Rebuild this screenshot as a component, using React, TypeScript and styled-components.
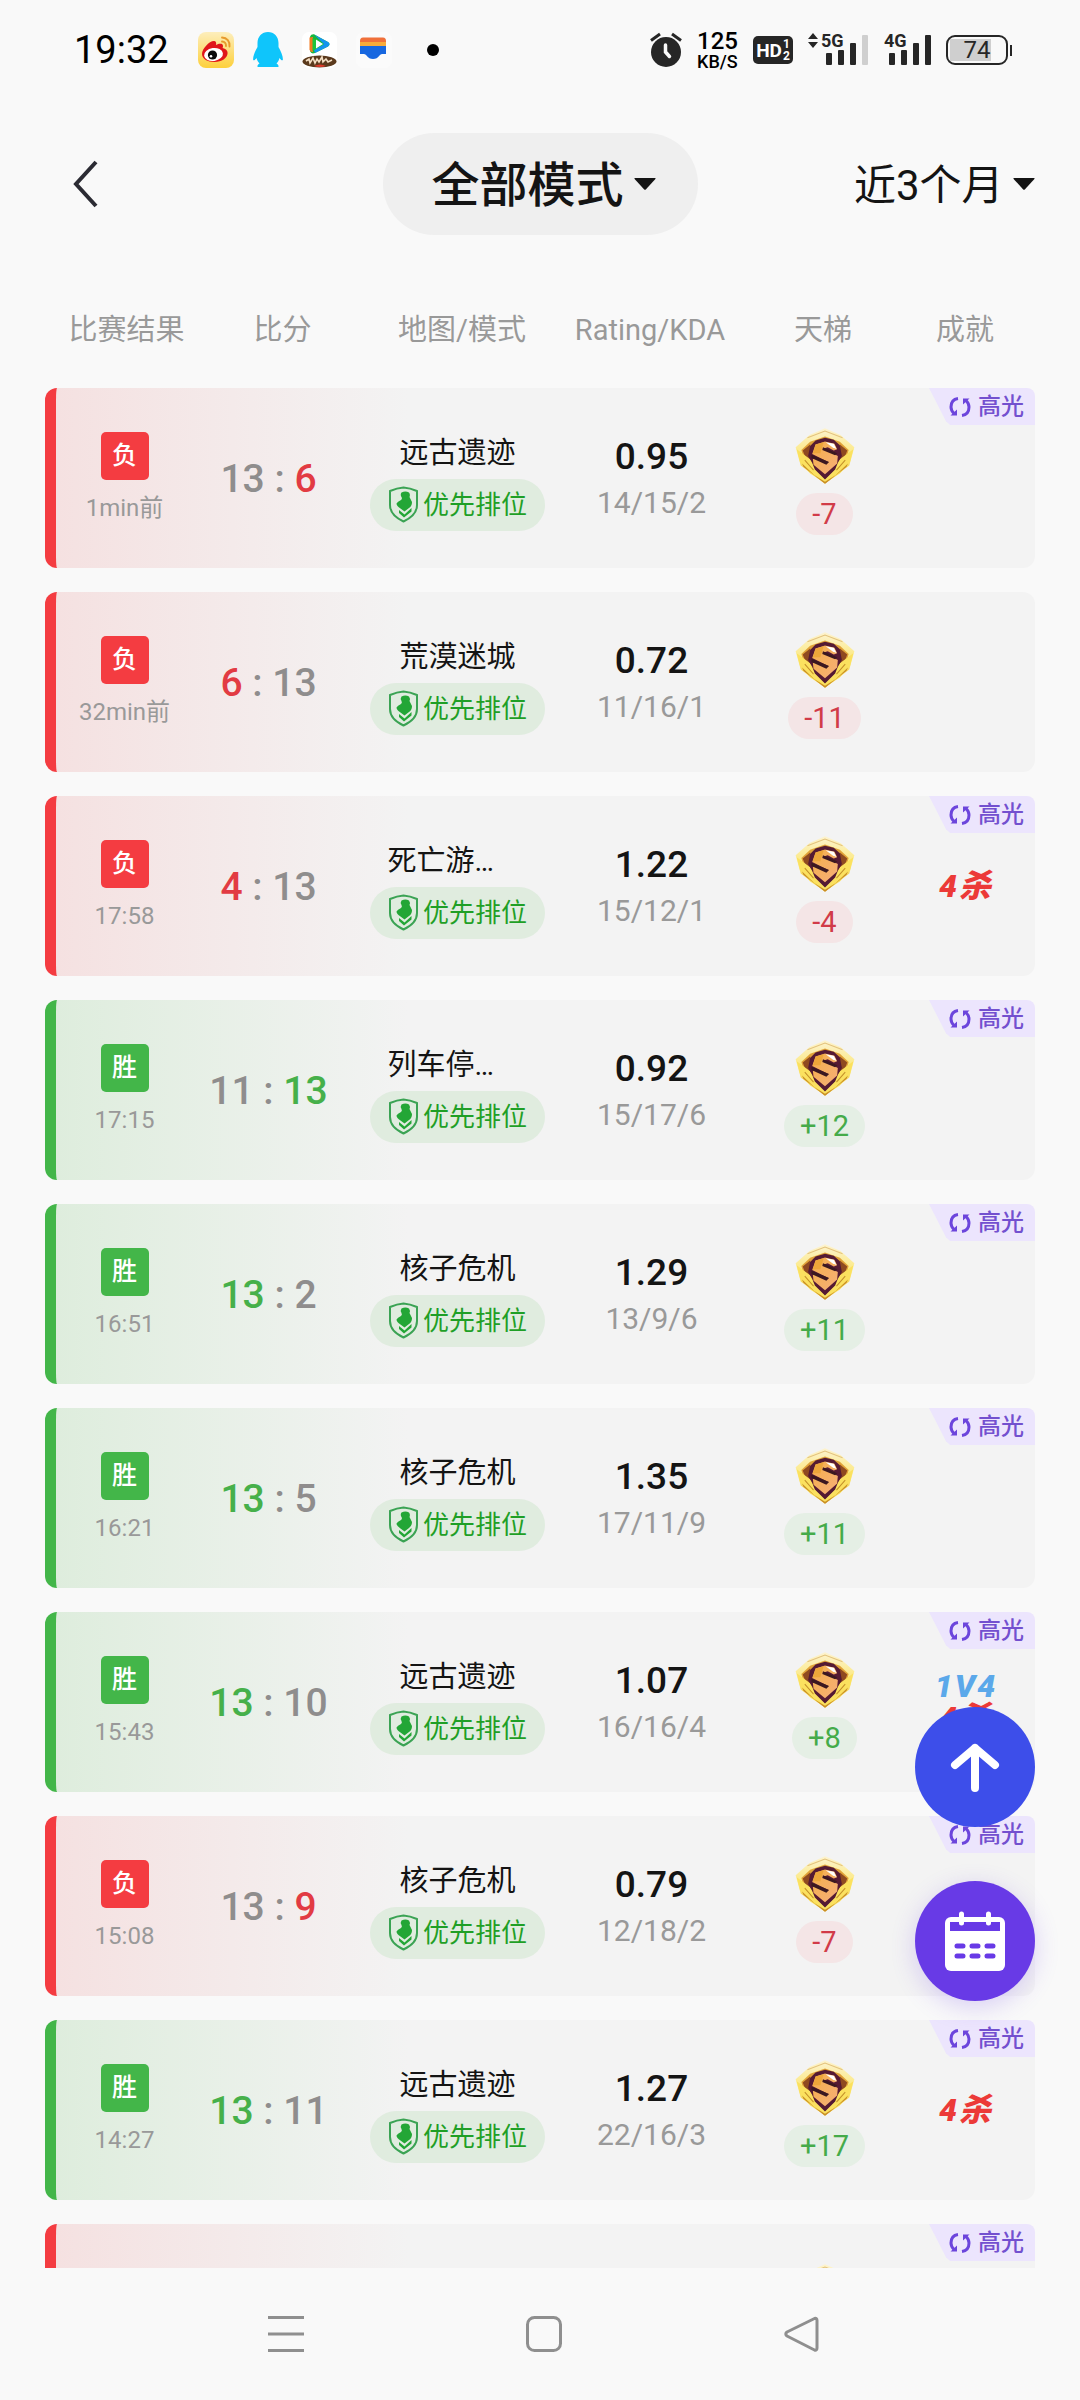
import React from "react";
import styled, { createGlobalStyle } from "styled-components";

const latinCjk = `Roboto, "Noto Sans CJK SC", "Noto Sans", sans-serif`;

type Result = "win" | "loss";

const tone = {
  win: { solid: "#43b649", score: "#46b04a", tint: "#deeddd", pill: "#e5efe5", delta: "#45ab4a", label: "胜" },
  loss: { solid: "#f43c41", score: "#e23b43", tint: "#f5e1e1", pill: "#f4e5e6", delta: "#d13b48", label: "负" },
};

const GlobalStyle = createGlobalStyle`
  *, *::before, *::after { box-sizing: border-box; }
  body { margin: 0; background: #f9f9f9; font-family: ${latinCjk}; color: #141414; }
  button, select { font: inherit; color: inherit; border: 0; background: none; padding: 0; cursor: pointer; }
  svg { display: block; flex: none; }
`;

const Shell = styled.div`
  height: 100vh;
  display: flex;
  flex-direction: column;
  background: #f9f9f9;
`;

/* ---------- status bar ---------- */

const StatusBar = styled.div`
  flex: none;
  height: 100px;
  padding: 0 68px 0 74px;
  display: flex;
  align-items: center;
  justify-content: space-between;
  color: #000;
`;

const StatusGroup = styled.div<{ $gap: number }>`
  display: flex;
  align-items: center;
  gap: ${(p) => p.$gap}px;
`;

const Clock = styled.time`
  font-size: 38px;
  line-height: 44px;
  font-weight: 400;
  margin-right: 10px;
`;

const MoreDot = styled.span`
  width: 12px;
  height: 12px;
  margin-left: 16px;
  border-radius: 50%;
  background: #000;
`;

const Speed = styled.div`
  display: flex;
  flex-direction: column;
  font-weight: 500;
`;

const SpeedValue = styled.span`
  font-size: 24px;
  line-height: 24px;
`;

const SpeedUnit = styled.span`
  font-size: 18px;
  line-height: 18px;
`;

const HdBadge = styled.div`
  width: 40px;
  height: 28px;
  border-radius: 5px;
  background: #262626;
  color: #fff;
  display: flex;
  align-items: center;
  justify-content: center;
  gap: 1px;
  font-size: 19px;
  font-weight: 700;
`;

const HdLines = styled.span`
  display: flex;
  flex-direction: column;
  font-size: 12px;
  line-height: 12px;
`;

const Battery = styled.div`
  display: flex;
  align-items: center;
  gap: 2px;

  &::after {
    content: "";
    width: 2px;
    height: 11px;
    background: #262626;
  }
`;

const BatteryBody = styled.div`
  width: 62px;
  height: 30px;
  border: 2px solid #262626;
  border-radius: 9px;
  background: linear-gradient(#cfcfcf, #cfcfcf) 2px 50% / 41px 22px no-repeat;
  color: #262626;
  font-size: 24px;
  line-height: 26px;
  text-align: center;
`;

/* ---------- top bar ---------- */

const TopBar = styled.header`
  flex: none;
  height: 168px;
  padding: 0 45px;
  display: grid;
  grid-template-columns: minmax(0, 1fr) auto minmax(0, 1fr);
  align-items: center;
`;

const BackButton = styled.button`
  justify-self: start;
  padding: 12px 28px;
`;

const Picker = styled.label<{ $filled?: boolean }>`
  justify-self: end;
  display: flex;
  align-items: center;
  gap: 9px;
  height: 102px;
  padding: ${(p) => (p.$filled ? "0 42px 0 49px" : "0")};
  border-radius: 51px;
  background: ${(p) => (p.$filled ? "#efefef" : "transparent")};
  font-size: ${(p) => (p.$filled ? 48 : 42)}px;
  font-weight: ${(p) => (p.$filled ? 500 : 400)};
`;

const PickerSelect = styled.select`
  appearance: none;
  outline: 0;
  padding-top: 4px;
  line-height: 60px;
`;

/* ---------- match table ---------- */

const Scroller = styled.main`
  flex: 1;
  min-height: 0;
  padding: 0 45px;
  overflow-y: auto;
  scrollbar-width: none;
`;

const Table = styled.table`
  display: block;
`;

const TableHead = styled.thead`
  display: block;
`;

const HeadRow = styled.tr`
  height: 120px;
  padding: 4px 7px 0 11px;
  display: grid;
  grid-template-columns: 141fr 171fr 188fr 188fr 158fr 126fr;
  align-items: center;
`;

const HeadCell = styled.th`
  padding: 0;
  font-size: 29px;
  line-height: 40px;
  font-weight: 400;
  color: #999;
  text-align: center;
  white-space: nowrap;
`;

const TableBody = styled.tbody`
  display: flex;
  flex-direction: column;
  gap: 24px;
`;

const MatchRow = styled.tr<{ $result: Result }>`
  position: relative;
  height: 180px;
  padding-right: 22px;
  display: grid;
  grid-template-columns: 137fr 151fr 227fr 161fr 185fr 96fr;
  border-left: 11px solid ${(p) => tone[p.$result].solid};
  border-radius: 12px;
  background: linear-gradient(90deg, ${(p) => tone[p.$result].tint}, #f3f3f3 36%);
`;

const Cell = styled.td<{ $gap?: number; $top?: number }>`
  padding: ${(p) => p.$top ?? 0}px 0 0;
  min-width: 0;
  display: flex;
  flex-direction: column;
  align-items: center;
  justify-content: center;
  gap: ${(p) => p.$gap ?? 0}px;
  white-space: nowrap;
`;

const ResultMark = styled.span<{ $result: Result }>`
  width: 48px;
  height: 48px;
  border-radius: 5px;
  background: ${(p) => tone[p.$result].solid};
  color: #fff;
  font-size: 25px;
  line-height: 48px;
  font-weight: 500;
  text-align: center;
`;

const When = styled.span`
  font-size: 24px;
  line-height: 32px;
  color: #999;
`;

const Score = styled.span`
  font-size: 39px;
  line-height: 48px;
  font-weight: 500;
  color: #8f8d8d;
`;

const OwnScore = styled.span<{ $result: Result }>`
  color: ${(p) => tone[p.$result].score};
`;

const MapName = styled.span<{ $clipped: boolean }>`
  width: 140px;
  font-size: 29px;
  line-height: 40px;
  text-align: ${(p) => (p.$clipped ? "left" : "center")};
`;

const ModePill = styled.span`
  height: 52px;
  padding: 0 18px;
  display: flex;
  align-items: center;
  gap: 4px;
  border-radius: 26px;
  background: #e0ecdf;
  color: #1f9f26;
  font-size: 26px;
  line-height: 36px;
`;

const Rating = styled.span`
  font-size: 37px;
  line-height: 44px;
  font-weight: 500;
`;

const Kda = styled.span`
  font-size: 30px;
  line-height: 40px;
  color: #999;
`;

const Delta = styled.span<{ $result: Result }>`
  height: 42px;
  padding: 0 16px;
  border-radius: 21px;
  background: ${(p) => tone[p.$result].pill};
  color: ${(p) => tone[p.$result].delta};
  font-size: 29px;
  line-height: 42px;
`;

const Award = styled.span<{ $kind: string }>`
  height: 24px;
  display: flex;
  align-items: center;
  gap: 2px;
  font-size: 32px;
  line-height: 24px;
  font-weight: 900;
  font-style: italic;
  color: ${(p) => (p.$kind === "1V4" ? "#5ba8ea" : "#ec3a38")};
`;

const Highlight = styled.button`
  position: absolute;
  top: 0;
  right: 0;
  width: 106px;
  height: 37px;
  padding: 0 11px 0 20px;
  display: flex;
  align-items: center;
  justify-content: space-between;
  border-radius: 0 8px 0 0;
  background: #ece5fd;
  clip-path: polygon(0 0, 100% 0, 100% 100%, 20% 100%, 16% 90%);
  color: #7350cf;
  font-size: 23px;
  line-height: 36px;
  font-weight: 500;
`;

/* ---------- floating buttons and system navigation ---------- */

const FloatingStack = styled.div`
  position: fixed;
  right: 45px;
  bottom: 399px;
  display: flex;
  flex-direction: column;
  gap: 54px;
`;

const FloatingButton = styled.button<{ $color: string; $glow?: boolean }>`
  width: 120px;
  height: 120px;
  border-radius: 50%;
  display: flex;
  align-items: center;
  justify-content: center;
  background: ${(p) => p.$color};
  box-shadow: ${(p) => (p.$glow ? "0 6px 24px rgba(104, 58, 230, 0.22)" : "none")};
`;

const NavBar = styled.nav`
  flex: none;
  height: 132px;
  padding: 0 24px 0 32px;
  display: flex;
  align-items: center;
  justify-content: center;
  gap: 222px;
`;

const NavButton = styled.button`
  display: flex;
`;

/* ---------- drawings ---------- */

const Caret = () => (
  <svg width="22" height="12" viewBox="0 0 22 12" aria-hidden="true">
    <path d="M1 0h20q1 0 .4.9L12 11.3q-1 1-2 0L.6.9Q0 0 1 0z" fill="#141414" />
  </svg>
);

const Weibo = () => (
  <svg width="36" height="36" viewBox="0 0 36 36" aria-hidden="true">
    <defs>
      <linearGradient id="weiboBg" x1="0" y1="0" x2="0" y2="1">
        <stop offset="0" stopColor="#fdeebc" />
        <stop offset="1" stopColor="#fdd03c" />
      </linearGradient>
    </defs>
    <rect width="36" height="36" rx="8" fill="url(#weiboBg)" />
    <path d="M4 22c0-5 7-13 12-13 2 0 2.500 2 2 4 3-1.500 7-2 7 1 0 1-.4 2-.4 2 3 .6 5 2.600 5 5 0 5-6 9-13 9S4 27 4 22z" fill="#e0161b" />
    <ellipse cx="15.500" cy="22.500" rx="9.500" ry="6.500" fill="#fff" transform="rotate(-8 15.500 22.500)" />
    <circle cx="14.500" cy="23" r="4.600" fill="#0a0a0a" />
    <circle cx="13" cy="24.300" r="1.300" fill="#fff" />
    <path d="M24 5.500c5 .2 8 4 7.500 9M24 9.500c2.800.2 4.200 2 4 4.500" fill="none" stroke="#e79a2c" strokeWidth="1.900" strokeLinecap="round" />
  </svg>
);

const Penguin = () => (
  <svg width="30" height="36" viewBox="0 0 30 36" aria-hidden="true">
    <path d="M15 0c6 0 10.500 4.500 10.500 11v4c2.500 4.500 4.500 9 4.400 12.400-.2 1.600-1.700 1-3.400-1.400-.5 2.200-1.500 4-3 5.500 1.500.8 2.300 1.800 1.900 3.500H4.600c-.4-1.700.4-2.700 1.900-3.500-1.500-1.500-2.500-3.300-3-5.500C1.800 28.400.3 29 .1 27.400 0 24 2 19.500 4.500 15v-4C4.500 4.500 9 0 15 0z" fill="#0fc5fb" />
  </svg>
);

const VideoApp = () => (
  <svg width="35" height="36" viewBox="0 0 35 36" aria-hidden="true">
    <rect width="35" height="36" rx="7" fill="#fff" />
    <path d="M8 4.500Q9 2 12 2.300L26 10q3 2 0 4.500L13 21q-4 1.500-5-2z" fill="#16b83c" />
    <path d="M12 2.500 26 10q3 2 0 4.500L13 21l-1-3 10-6z" fill="#1495ef" />
    <path d="M7.500 5.500 11 5v15q-3 0-3.500-2.500z" fill="#f37a1f" />
    <path d="M10.500 6v13l11-6.500z" fill="#1fc43a" />
    <path d="M14 7.500v9l7-4.500z" fill="#fff" />
    <ellipse cx="17.500" cy="29.500" rx="17" ry="6" fill="#5b3a1d" />
    <path d="M4 29l3-2 1 4 3-5 2 5 2-4 2 3 3-5 1 5 3-3 2 3 4-2" fill="none" stroke="#f4dfc4" strokeWidth="1.600" />
    <path d="M12 34q6-3 12 0-6 2-12 0z" fill="#df3a2a" />
  </svg>
);

const Wallet = () => (
  <svg width="36" height="36" viewBox="0 0 36 36" aria-hidden="true">
    <rect width="36" height="36" rx="7" fill="#fbfbfb" />
    <path d="M4 9q0-3.500 3-3.500h20q3 0 3 3.500v2H4z" fill="#f0703a" />
    <path d="M4 10h26v5H4z" fill="#f8ab3a" />
    <path d="M4 14h26v8h-4q-1.500 0-2.500 1.500-2.500 3.500-6.500 3.500t-6.500-3.500Q9.500 22 8 22H4z" fill="#1767e0" />
  </svg>
);

const Alarm = () => (
  <svg width="32" height="36" viewBox="0 0 32 36" aria-hidden="true">
    <circle cx="16" cy="20" r="15" fill="#262626" />
    <path d="M1 8.500 10 2M31 8.500 22 2" stroke="#262626" strokeWidth="3" />
    <path d="M15.500 13v7l4 4.500" fill="none" stroke="#f9f9f9" strokeWidth="3.500" strokeLinecap="round" />
  </svg>
);

const Signal = ({ label, weak }: { label: string; weak?: boolean }) => (
  <svg width={weak ? 60 : 48} height="44" viewBox={weak ? "0 -5 60 44" : "12 -5 48 44"} aria-label={label}>
    {weak && <path d="M5 0l5 6H0zM5 15l-5-6h10z" fill="#262626" />}
    <text x="13" y="14" fontFamily="Roboto, sans-serif" fontSize="18" fontWeight="700" fill="#262626">
      {label}
    </text>
    <g fill="#262626">
      <rect x="18" y="20" width="6" height="12" rx="1" />
      <rect x="30" y="17" width="6" height="15" rx="1" />
      <rect x="42" y="10" width="6" height="22" rx="1" />
      <rect x="54" y="2" width="6" height="30" rx="1" fill={weak ? "#cfcfcf" : "#262626"} />
    </g>
  </svg>
);

const Shield = () => (
  <svg width="31" height="37" viewBox="0 0 31 37" aria-hidden="true">
    <path d="M15.500 1.500Q22 2 29 5v14c0 8-6 13-13.500 16.500C8 32 2 27 2 19V5q7-3 13.500-3.500z" fill="none" stroke="#3ba354" strokeWidth="2" strokeLinejoin="round" />
    <path d="M13.500 6.500q4-2 7.500 0 1.500 2 .5 4.500l2.500 5q0 4-3 6l-4.500 3.500-4-3q-4-2.500-4-5 1-2 4.500-3.500 1.500-1 .5-3-1.500-2.500 0-4.500z" fill="#23a636" />
    <path d="M11 24l5.500 4.500 7-6.500v3.500l-7.500 6-5-4.500z" fill="#23a636" />
  </svg>
);

const RankBadge = () => (
  <svg width="60" height="56" viewBox="104 57 176 166" aria-label="S">
    <defs>
      <linearGradient id="rankRim" x1="0" y1="0" x2="0" y2="1">
        <stop offset="0" stopColor="#fdf3d0" />
        <stop offset="0.550" stopColor="#fbe774" />
        <stop offset="1" stopColor="#e8b92c" />
      </linearGradient>
      <linearGradient id="rankCore" x1="0" y1="0" x2="1" y2="1">
        <stop offset="0" stopColor="#f5b04a" />
        <stop offset="1" stopColor="#f6ae78" />
      </linearGradient>
    </defs>
    <path d="M192 58 238 78 279 114 264 168 192 222 120 168 105 114 146 78z" fill="url(#rankRim)" />
    <path d="M140 86 192 66 244 86" fill="none" stroke="#e3c27c" strokeWidth="3" />
    <path d="M192 82 236 98 262 122 252 158 192 208 132 158 122 122 148 98z" fill="#e0a238" />
    <path d="M126 124 148 106 152 152 136 150zM258 124 236 106 232 152 248 150z" fill="#8f4a20" />
    <path d="M108 120 148 150 162 176 192 208 222 176 236 150 276 120 266 158 236 192 192 220 148 192 118 158z" fill="#fbe15f" />
    <path d="M192 86 218 92 236 108 242 140 230 160 222 180 192 210 162 180 154 160 142 140 148 110 164 94z" fill="#551a33" />
    <path d="M164 106 192 97 220 104 228 120 218 124 200 114 188 118 230 140 228 162 192 194 158 166 156 148 172 150 194 162 202 158 154 134z" fill="url(#rankCore)" />
    <path d="M164 106 188 99 178 132 156 132z" fill="#eda63a" />
    <path d="M194 99 218 104 226 119 214 114z" fill="#fff" />
    <path d="M186 114 228 132 222 138 184 122zM152 136 204 158 196 166 152 146z" fill="#3b1820" />
    <path d="M124 162 160 196 192 216 224 196 260 162 256 172 192 222 128 172z" fill="#c98d26" />
    <path d="M132 152 158 182M252 152 226 182" fill="none" stroke="#c4902a" strokeWidth="3" />
  </svg>
);

const HighlightMark = () => (
  <svg width="22" height="22" viewBox="0 0 22 22" fill="none" stroke="#6c45dc" strokeWidth="3" aria-hidden="true">
    <path d="M9 2.500Q2 3.500 2 11q0 3.500 3 6.500M13 19.500q7-1 7-8.500 0-3.500-3-6.500" />
    <path d="M1.500 19.500H8v-6zM20.500 2.500H14v6z" fill="#6c45dc" stroke="none" />
  </svg>
);

/* ---------- data ---------- */

interface Match {
  result: Result;
  when: string;
  left: number;
  right: number;
  own: "left" | "right";
  map: string;
  rating: string;
  kda: string;
  delta: string;
  highlight: boolean;
  awards: string[];
}

const matches: Match[] = [
  { result: "loss", when: "1min前", left: 13, right: 6, own: "right", map: "远古遗迹", rating: "0.95", kda: "14/15/2", delta: "-7", highlight: true, awards: [] },
  { result: "loss", when: "32min前", left: 6, right: 13, own: "left", map: "荒漠迷城", rating: "0.72", kda: "11/16/1", delta: "-11", highlight: false, awards: [] },
  { result: "loss", when: "17:58", left: 4, right: 13, own: "left", map: "死亡游…", rating: "1.22", kda: "15/12/1", delta: "-4", highlight: true, awards: ["4杀"] },
  { result: "win", when: "17:15", left: 11, right: 13, own: "right", map: "列车停…", rating: "0.92", kda: "15/17/6", delta: "+12", highlight: true, awards: [] },
  { result: "win", when: "16:51", left: 13, right: 2, own: "left", map: "核子危机", rating: "1.29", kda: "13/9/6", delta: "+11", highlight: true, awards: [] },
  { result: "win", when: "16:21", left: 13, right: 5, own: "left", map: "核子危机", rating: "1.35", kda: "17/11/9", delta: "+11", highlight: true, awards: [] },
  { result: "win", when: "15:43", left: 13, right: 10, own: "left", map: "远古遗迹", rating: "1.07", kda: "16/16/4", delta: "+8", highlight: true, awards: ["1V4", "4杀"] },
  { result: "loss", when: "15:08", left: 13, right: 9, own: "right", map: "核子危机", rating: "0.79", kda: "12/18/2", delta: "-7", highlight: true, awards: [] },
  { result: "win", when: "14:27", left: 13, right: 11, own: "left", map: "远古遗迹", rating: "1.27", kda: "22/16/3", delta: "+17", highlight: true, awards: ["4杀"] },
];

const columns = ["比赛结果", "比分", "地图/模式", "Rating/KDA", "天梯", "成就"];

const MatchLine = ({ match }: { match: Match }) => (
  <MatchRow $result={match.result}>
    <Cell $gap={12}>
      <ResultMark $result={match.result}>{tone[match.result].label}</ResultMark>
      <When>{match.when}</When>
    </Cell>
    <Cell $top={2}>
      <Score>
        {match.own === "left" ? <OwnScore $result={match.result}>{match.left}</OwnScore> : match.left}
        {" : "}
        {match.own === "right" ? <OwnScore $result={match.result}>{match.right}</OwnScore> : match.right}
      </Score>
    </Cell>
    <Cell $gap={6} $top={7}>
      <MapName $clipped={match.map.endsWith("…")}>{match.map}</MapName>
      <ModePill>
        <Shield />
        优先排位
      </ModePill>
    </Cell>
    <Cell $gap={4} $top={2}>
      <Rating>{match.rating}</Rating>
      <Kda>{match.kda}</Kda>
    </Cell>
    <Cell $gap={9} $top={7}>
      <RankBadge />
      <Delta $result={match.result}>{match.delta}</Delta>
    </Cell>
    <Cell $gap={8}>
      {match.awards.map((award) => (
        <Award key={award} $kind={award}>
          {[...award].map((mark) => (
            <span key={mark}>{mark}</span>
          ))}
        </Award>
      ))}
      {match.highlight && (
        <Highlight type="button">
          <HighlightMark />
          高光
        </Highlight>
      )}
    </Cell>
  </MatchRow>
);

export default function App() {
  return (
    <Shell>
      <GlobalStyle />
      <StatusBar>
        <StatusGroup $gap={19}>
          <Clock>19:32</Clock>
          <Weibo />
          <Penguin />
          <VideoApp />
          <Wallet />
          <MoreDot />
        </StatusGroup>
        <StatusGroup $gap={15}>
          <Alarm />
          <Speed>
            <SpeedValue>125</SpeedValue>
            <SpeedUnit>KB/S</SpeedUnit>
          </Speed>
          <HdBadge>
            HD
            <HdLines>
              <span>1</span>
              <span>2</span>
            </HdLines>
          </HdBadge>
          <Signal label="5G" weak />
          <Signal label="4G" />
          <Battery>
            <BatteryBody>74</BatteryBody>
          </Battery>
        </StatusGroup>
      </StatusBar>

      <TopBar>
        <BackButton type="button" aria-label="返回">
          <svg width="26" height="48" viewBox="0 0 26 48" aria-hidden="true">
            <path d="M23 2 3 24l20 22" fill="none" stroke="#2b2b33" strokeWidth="4" />
          </svg>
        </BackButton>
        <Picker $filled>
          <PickerSelect aria-label="模式">
            <option>全部模式</option>
          </PickerSelect>
          <Caret />
        </Picker>
        <Picker>
          <PickerSelect aria-label="时间">
            <option>近3个月</option>
          </PickerSelect>
          <Caret />
        </Picker>
      </TopBar>

      <Scroller>
        <Table>
          <TableHead>
            <HeadRow>
              {columns.map((name) => (
                <HeadCell key={name} scope="col">
                  {name}
                </HeadCell>
              ))}
            </HeadRow>
          </TableHead>
          <TableBody>
            {matches.map((match) => (
              <MatchLine key={match.when} match={match} />
            ))}
            <MatchRow $result="loss">
              <Cell />
              <Cell />
              <Cell />
              <Cell />
              <Cell $gap={9} $top={7}>
                <RankBadge />
                <Delta $result="loss" />
              </Cell>
              <Cell>
                <Highlight type="button">
                  <HighlightMark />
                  高光
                </Highlight>
              </Cell>
            </MatchRow>
          </TableBody>
        </Table>
      </Scroller>

      <FloatingStack>
        <FloatingButton type="button" aria-label="回到顶部" $color="#3d4eea">
          <svg width="50" height="50" viewBox="0 0 50 50" fill="none" stroke="#fff" strokeWidth="8" strokeLinecap="round" strokeLinejoin="round" aria-hidden="true">
            <path d="M25 46V6M5 23 25 6l20 17" />
          </svg>
        </FloatingButton>
        <FloatingButton type="button" aria-label="日历" $color="#683ae6" $glow>
          <svg width="60" height="60" viewBox="0 0 60 60" aria-hidden="true">
            <rect y="6" width="60" height="54" rx="6" fill="#fff" />
            <rect x="5" y="11" width="50" height="9" fill="#683ae6" />
            <path d="M16.500 3v9M43.500 3v9" stroke="#fff" strokeWidth="5" strokeLinecap="round" />
            <path d="M12 35h6M27 35h6M42 35h6M12 45h6M27 45h6M42 45h6" stroke="#683ae6" strokeWidth="5" strokeLinecap="round" />
          </svg>
        </FloatingButton>
      </FloatingStack>

      <NavBar>
        <NavButton type="button" aria-label="最近任务">
          <svg width="36" height="36" viewBox="0 0 36 36" stroke="#8f8f8f" strokeWidth="3" aria-hidden="true">
            <path d="M0 1.500h36M0 18h36M0 34.500h36" />
          </svg>
        </NavButton>
        <NavButton type="button" aria-label="主屏幕">
          <svg width="36" height="36" viewBox="0 0 36 36" fill="none" stroke="#8f8f8f" strokeWidth="3" aria-hidden="true">
            <rect x="1.500" y="1.500" width="33" height="33" rx="7" />
          </svg>
        </NavButton>
        <NavButton type="button" aria-label="后退">
          <svg width="36" height="36" viewBox="0 0 36 36" fill="none" stroke="#8f8f8f" strokeWidth="3" strokeLinejoin="round" aria-hidden="true">
            <path d="M30.500 2.500 3 16q-2.500 2 0 4l27.500 14q2.500.8 2.500-2V4.500q0-2.800-2.500-2z" />
          </svg>
        </NavButton>
      </NavBar>
    </Shell>
  );
}
